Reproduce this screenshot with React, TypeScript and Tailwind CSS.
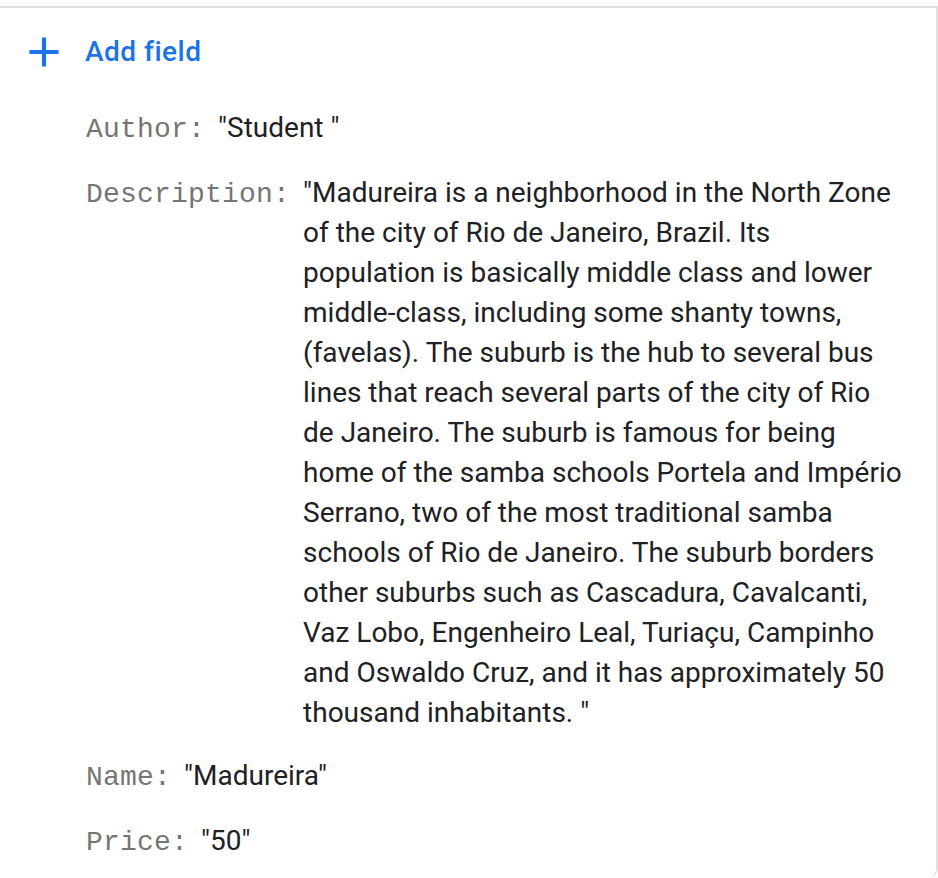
interface Field {
  name: string;
  value: string;
}

const fields: Field[] = [
  { name: 'Author', value: '"Student "' },
  {
    name: 'Description',
    value:
      '"Madureira is a neighborhood in the North Zone of the city of Rio de Janeiro, Brazil. Its population is basically middle class and lower middle-class, including some shanty towns, (favelas). The suburb is the hub to several bus lines that reach several parts of the city of Rio de Janeiro. The suburb is famous for being home of the samba schools Portela and Império Serrano, two of the most traditional samba schools of Rio de Janeiro. The suburb borders other suburbs such as Cascadura, Cavalcanti, Vaz Lobo, Engenheiro Leal, Turiaçu, Campinho and Oswaldo Cruz, and it has approximately 50 thousand inhabitants. "',
  },
  { name: 'Name', value: '"Madureira"' },
  { name: 'Price', value: '"50"' },
];

function AddIcon() {
  return (
    <svg width="50" height="50" viewBox="0 0 24 24" fill="#1a73e8" aria-hidden>
      <path d="M19 13h-6v6h-2v-6H5v-2h6V5h2v6h6v2z" />
    </svg>
  );
}

export default function App() {
  return (
    <div className="min-h-[878px] bg-white pt-[6px] font-['Roboto',sans-serif]">
      <div className="w-[938px] h-[872px] border-t-2 border-r-2 border-[#e0e0e0] rounded-br-[10px] bg-white pr-[33px]">
        <button className="mt-[19px] ml-[19px] flex items-center gap-[16px] text-[#1a73e8]">
          <AddIcon />
          <span className="text-[28px] leading-[40px] font-medium tracking-[0.5px]">Add field</span>
        </button>

        <div className="mt-[31px] pl-[86px] flex flex-col gap-[23px]">
          {fields.map((f) => (
            <div key={f.name} className="flex items-baseline">
              <span className="shrink-0 font-['Liberation_Mono',monospace] text-[28px] leading-[40px] tracking-[0.2px] text-[#757575]">
                {f.name}:
              </span>
              <span className="ml-[13px] text-[28px] leading-[40px] text-[#202124]">
                {f.value}
              </span>
            </div>
          ))}
        </div>
      </div>
    </div>
  );
}
